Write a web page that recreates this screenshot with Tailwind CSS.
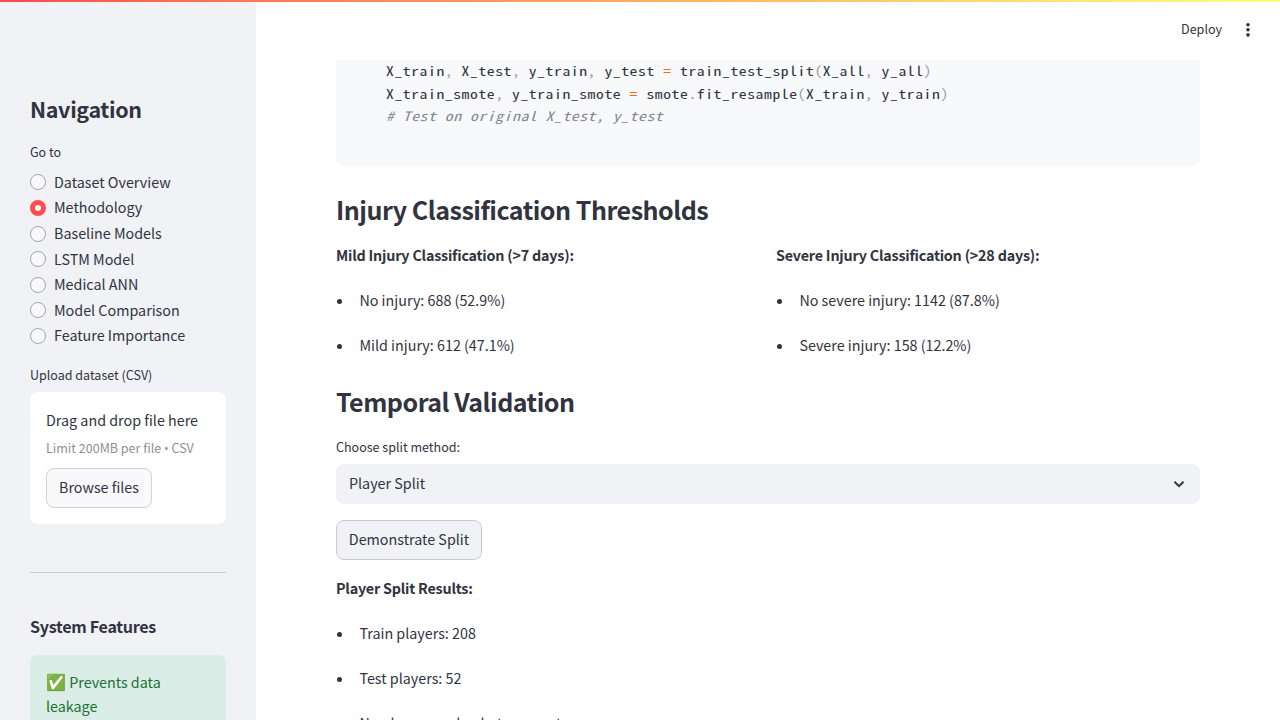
<!DOCTYPE html>
<html lang="en">
<head>
<meta charset="utf-8">
<title>Methodology</title>
<script src="https://cdn.jsdelivr.net/npm/@tailwindcss/browser@4"></script>
</head>
<body class="relative flex h-screen overflow-hidden bg-white font-['Noto_Sans_CJK_SC','Noto_Sans',sans-serif] text-[14.32px] leading-6 text-[#31333f]">
  <div class="absolute inset-x-0 top-0 z-10 h-0.5 bg-linear-to-r from-[#ff4b4b] to-[#fffd80]"></div>

  <aside class="h-full w-64 shrink-0 overflow-hidden bg-[#f0f2f6] px-[30px] pt-[95px]">
    <h2 class="h-7 text-[21.48px] leading-7 font-bold tracking-[-0.33px]">Navigation</h2>
    <p class="mt-[19px] h-5 text-[12.53px] leading-5">Go to</p>
    <div class="mt-[7.7px] flex flex-col">
      <label class="flex h-[25.6px] items-center gap-2"><span class="size-4 rounded-full border border-[#a3a5ad] bg-[#f9f9fb]"></span><span class="pb-[1.3px]">Dataset Overview</span></label>
      <label class="flex h-[25.6px] items-center gap-2"><span class="flex size-4 items-center justify-center rounded-full bg-[#ff4b4b]"><span class="size-1.5 rounded-full bg-white"></span></span><span class="pb-[1.3px]">Methodology</span></label>
      <label class="flex h-[25.6px] items-center gap-2"><span class="size-4 rounded-full border border-[#a3a5ad] bg-[#f9f9fb]"></span><span class="pb-[1.3px]">Baseline Models</span></label>
      <label class="flex h-[25.6px] items-center gap-2"><span class="size-4 rounded-full border border-[#a3a5ad] bg-[#f9f9fb]"></span><span class="pb-[1.3px]">LSTM Model</span></label>
      <label class="flex h-[25.6px] items-center gap-2"><span class="size-4 rounded-full border border-[#a3a5ad] bg-[#f9f9fb]"></span><span class="pb-[1.3px]">Medical ANN</span></label>
      <label class="flex h-[25.6px] items-center gap-2"><span class="size-4 rounded-full border border-[#a3a5ad] bg-[#f9f9fb]"></span><span class="pb-[1.3px]">Model Comparison</span></label>
      <label class="flex h-[25.6px] items-center gap-2"><span class="size-4 rounded-full border border-[#a3a5ad] bg-[#f9f9fb]"></span><span class="pb-[1.3px]">Feature Importance</span></label>
    </div>
    <p class="mt-[16.1px] h-5 text-[12.53px] leading-5">Upload dataset (CSV)</p>
    <div class="mt-[7px] h-[132px] rounded-lg bg-white px-4 pt-[15px]">
      <p class="h-[26px] leading-[26px]">Drag and drop file here</p>
      <p class="mt-[5px] h-5 text-[12.53px] leading-5 whitespace-nowrap text-[#8d8f97]">Limit 200MB per file <span class="font-['Open_Sans'] text-[12.53px]">•</span> CSV</p>
      <button class="mt-2.5 flex h-10 w-[106px] items-center justify-center rounded-lg border border-[#d0d1d5] bg-[#f9f9fb] pb-0.5">Browse files</button>
    </div>
    <hr class="mt-12 h-px border-0 bg-[#cacbd0]">
    <h3 class="mt-[41px] h-6 text-[16.1px] font-bold tracking-[-0.3px]">System Features</h3>
    <div class="mt-[17px] h-32 rounded-lg bg-[#daede6] px-4 pt-[15px] text-[#177233]"><span class="text-base leading-none">✅</span> Prevents data leakage</div>
  </aside>

  <main class="flex h-full min-w-0 flex-1 flex-col">
    <header class="flex h-[60px] shrink-0 items-center justify-end pr-6">
      <span class="pb-0.5 text-[12.53px] leading-5">Deploy</span>
      <svg class="ml-[18px] h-4 w-4" viewBox="0 0 16 16" fill="currentColor"><circle cx="8" cy="2.7" r="1.8"/><circle cx="8" cy="7.8" r="1.8"/><circle cx="8" cy="12.9" r="1.8"/></svg>
    </header>
    <div class="min-h-0 flex-1 overflow-hidden px-20">
      <div class="h-[106px] rounded-b-lg bg-[#f8f9fb] pt-[0.4px] pl-[49.6px]">
        <pre class="w-max origin-left scale-x-[1.2] font-['Noto_Sans_Mono_CJK_SC','DejaVu_Sans_Mono',monospace] text-[13px] leading-[22.4px] font-light tracking-[0.5px]">X_train<span class="text-[#989dae]">,</span> X_test<span class="text-[#989dae]">,</span> y_train<span class="text-[#989dae]">,</span> y_test <span class="text-[#ed6f13]">=</span> train_test_split<span class="text-[#989dae]">(</span>X_all<span class="text-[#989dae]">,</span> y_all<span class="text-[#989dae]">)</span>
X_train_smote<span class="text-[#989dae]">,</span> y_train_smote <span class="text-[#ed6f13]">=</span> smote<span class="text-[#808495]">.</span>fit_resample<span class="text-[#989dae]">(</span>X_train<span class="text-[#989dae]">,</span> y_train<span class="text-[#989dae]">)</span>
<span class="text-[#808495] italic"># Test on original X_test, y_test</span></pre>
      </div>
      <h2 class="mt-[26px] h-[34px] text-[25.06px] leading-[34px] font-bold tracking-[-0.49px]">Injury Classification Thresholds</h2>
      <div class="mt-[17px] grid grid-cols-2 gap-4">
        <section>
          <p class="font-bold tracking-[-0.2px]">Mild Injury Classification (&gt;7 days):</p>
          <ul class="mt-[21px] flex flex-col gap-[21px]">
            <li class="flex items-center gap-[17.4px]"><span class="mt-0.5 ml-px size-[5px] rounded-full bg-current"></span>No injury: 688 (52.9%)</li>
            <li class="flex items-center gap-[17.4px]"><span class="mt-0.5 ml-px size-[5px] rounded-full bg-current"></span>Mild injury: 612 (47.1%)</li>
          </ul>
        </section>
        <section>
          <p class="font-bold tracking-[-0.2px]">Severe Injury Classification (&gt;28 days):</p>
          <ul class="mt-[21px] flex flex-col gap-[21px]">
            <li class="flex items-center gap-[17.4px]"><span class="mt-0.5 ml-px size-[5px] rounded-full bg-current"></span>No severe injury: 1142 (87.8%)</li>
            <li class="flex items-center gap-[17.4px]"><span class="mt-0.5 ml-px size-[5px] rounded-full bg-current"></span>Severe injury: 158 (12.2%)</li>
          </ul>
        </section>
      </div>
      <h2 class="mt-[27px] h-[34px] text-[25.06px] leading-[34px] font-bold tracking-[-0.49px]">Temporal Validation</h2>
      <p class="mt-[19px] h-5 text-[12.53px] leading-5">Choose split method:</p>
      <div class="mt-[7px] flex h-10 items-center justify-between rounded-lg bg-[#f0f2f6] px-[13px]"><span class="pb-0.5">Player Split</span>
        <svg class="size-4" viewBox="0 0 16 16" fill="none" stroke="currentColor" stroke-width="2"><path d="M3.5 5.8 8 10.2 12.5 5.8"/></svg>
      </div>
      <button class="mt-4 flex h-10 w-[146px] items-center justify-center rounded-lg border border-[#cacbd0] bg-[#f0f2f6] pb-0.5">Demonstrate Split</button>
      <p class="mt-4 font-bold tracking-[-0.2px]">Player Split Results:</p>
      <ul class="mt-[21px] flex flex-col gap-[21px]">
        <li class="flex items-center gap-[17.4px]"><span class="mt-0.5 ml-px size-[5px] rounded-full bg-current"></span>Train players: 208</li>
        <li class="flex items-center gap-[17.4px]"><span class="mt-0.5 ml-px size-[5px] rounded-full bg-current"></span>Test players: 52</li>
        <li class="flex items-center gap-[17.4px]"><span class="mt-0.5 ml-px size-[5px] rounded-full bg-current"></span>No player overlap between sets</li>
      </ul>
    </div>
  </main>
</body>
</html>
